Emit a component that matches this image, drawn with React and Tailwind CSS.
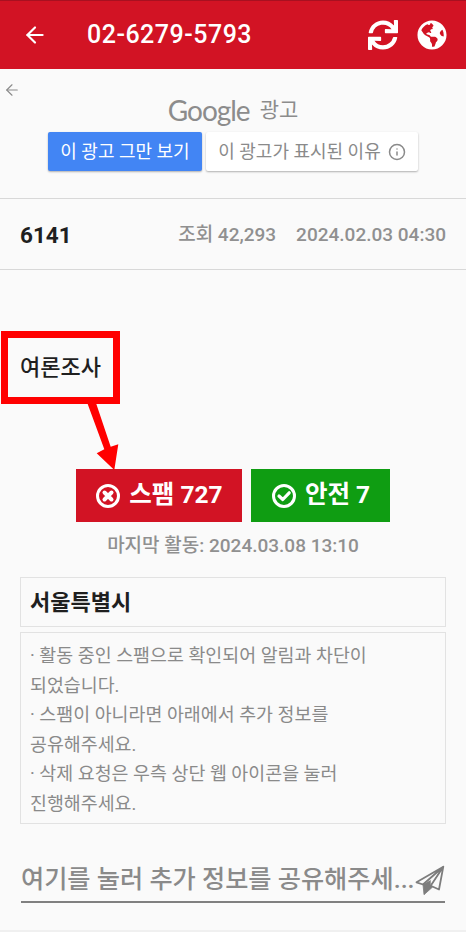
import React from 'react'
import { ArrowLeft, Info } from 'lucide-react'
import { FaSync, FaGlobeAmericas } from 'react-icons/fa'

const fontStack = "font-['Roboto','Noto_Sans_CJK_KR',sans-serif]"

const TimesIcon = () => (
  <svg width="26" height="26" viewBox="0 0 26 26" fill="none" stroke="currentColor" className="shrink-0">
    <circle cx="13" cy="13" r="10.5" strokeWidth="3" />
    <path d="M9.5 9.5 L16.5 16.5 M16.5 9.5 L9.5 16.5" strokeWidth="4" strokeLinecap="round" />
  </svg>
)

const CheckIcon = () => (
  <svg width="26" height="26" viewBox="0 0 26 26" fill="none" stroke="currentColor" className="shrink-0">
    <circle cx="13" cy="13" r="10.5" strokeWidth="3" />
    <path d="M8 13 L11.8 16.5 L18.2 9.8" strokeWidth="3.2" strokeLinecap="round" strokeLinejoin="round" />
  </svg>
)

const PlaneIcon = () => (
  <svg width="30" height="31" viewBox="0 0 30 31" className="shrink-0 text-[#7d7d7d]">
    <path d="M28.3 1.7 L1.5 17.3 L8 19.5 Z M28.3 1.7 L15.7 20.7 L24 24.5 Z" fill="none" stroke="currentColor" strokeWidth="1.8" strokeLinejoin="round" />
    <path d="M28.3 1.7 L8 19.5 L9 29.7 L17.3 22.3 L15.7 20.7 Z" fill="none" stroke="currentColor" strokeWidth="0.8" />
    <path d="M15.7 15 L8 19.5 L9 29.7 L17.3 22.3 L15.7 20.7 Z" fill="currentColor" />
  </svg>
)

const App = () => {
  return (
    <div className={`${fontStack} relative w-[466px] h-[932px] overflow-hidden bg-[#fafafa]`}>
      {/* Header */}
      <header className="h-[69px] bg-[#d21324] border-t border-[#a81020] flex items-center text-white">
        <ArrowLeft size={26} strokeWidth={2} className="ml-[22px] shrink-0" />
        <h1 className="ml-[39px] text-[25px] font-medium tracking-[0.5px]">02-6279-5793</h1>
        <div className="ml-auto mr-[19px] flex items-center gap-[19px]">
          <FaSync size={30} />
          <FaGlobeAmericas size={30} />
        </div>
      </header>

      {/* Ad block */}
      <section className="relative h-[130px] border-b border-[#d8d8d8] flex flex-col items-center pt-[26px]">
        <ArrowLeft size={18} strokeWidth={1.5} className="absolute left-[3px] top-[12px] text-[#8a8a8a]" />
        <div className="h-[30px] flex items-center gap-[10px] text-[#8c8c8c]">
          <span className="font-['Lato',sans-serif] text-[28px] leading-none tracking-[-1px]">Google</span>
          <span className="text-[21px] leading-none">광고</span>
        </div>
        <div className="mt-[7px] flex gap-[4px]">
          <button className="w-[154px] h-[39px] rounded-[2px] bg-[#4285f4] text-white text-[18px] shadow-[0_1px_2px_rgba(0,0,0,0.3)]">이 광고 그만 보기</button>
          <button className="w-[212px] h-[39px] rounded-[2px] bg-white text-[#8a8a8a] text-[18px] shadow-[0_1px_2px_rgba(0,0,0,0.3)] flex items-center justify-center gap-[7px]">
            이 광고가 표시된 이유
            <Info size={18} strokeWidth={2} />
          </button>
        </div>
      </section>

      {/* Title row */}
      <div className="h-[71px] border-b border-[#d8d8d8] flex items-center px-[20px]">
        <span className="text-[22.5px] font-bold text-[#1f1f1f] pt-[3px]">6141</span>
        <span className="ml-auto text-[19px] font-medium text-[#909090] pt-[2px]">조회 42,293</span>
        <span className="ml-[20px] text-[19px] font-medium text-[#909090] pt-[2px]">2024.02.03 04:30</span>
      </div>

      {/* Body */}
      <div className="px-[20px] pt-[83px]">
        <p className="text-[22px] leading-[30px] font-medium text-[#1f1f1f]">여론조사</p>
        <div className="mt-[86px] flex justify-center gap-[9px]">
          <button className="w-[166px] h-[53px] bg-[#d21324] text-white text-[24.5px] font-bold flex items-center justify-center gap-[8px]">
            <TimesIcon />
            스팸 727
          </button>
          <button className="w-[139px] h-[53px] bg-[#0f9d12] text-white text-[24.5px] font-bold flex items-center justify-center gap-[8px]">
            <CheckIcon />
            안전 7
          </button>
        </div>
        <p className="mt-[11px] text-center text-[19px] leading-[26px] font-medium text-[#909090]">마지막 활동: 2024.03.08 13:10</p>

        <div className="mt-[18px] h-[50px] border border-[#e2e2e2] flex items-center px-[9px] text-[22px] font-bold text-[#1f1f1f]">서울특별시</div>
        <div className="mt-[5px] h-[192px] border border-[#e2e2e2] px-[9px] pt-[8px] text-[18.4px] leading-[29.6px] text-[#8a8a8a]">
          <p>· 활동 중인 스팸으로 확인되어 알림과 차단이</p>
          <p>되었습니다.</p>
          <p>· 스팸이 아니라면 아래에서 추가 정보를</p>
          <p>공유해주세요.</p>
          <p>· 삭제 요청은 우측 상단 웹 아이콘을 눌러</p>
          <p>진행해주세요.</p>
        </div>

        <div className="mt-[35px] mx-[1px] h-[44px] border-b-2 border-[#808080] flex items-center justify-between text-[#8a8a8a]">
          <span className="text-[25.2px] leading-none font-medium whitespace-nowrap">여기를 눌러 추가 정보를 공유해주세...</span>
          <PlaneIcon />
        </div>
      </div>

      <div className="absolute left-0 right-0 top-[930px] h-[2px] bg-[#f0f0f0]" />

      {/* Red annotation over the page */}
      <div className="absolute left-[1px] top-[331px] w-[119px] h-[73px] border-[7px] border-[#ff0000]" />
      <svg className="absolute left-[85px] top-[400px]" width="40" height="72" viewBox="0 0 40 72">
        <path d="M2.3 3 L11 3 L25.7 46.7 L33.3 44.3 L29.3 70 L11.7 53.3 L19.3 49.3 Z" fill="#ff0000" />
      </svg>
    </div>
  )
}

export default App
